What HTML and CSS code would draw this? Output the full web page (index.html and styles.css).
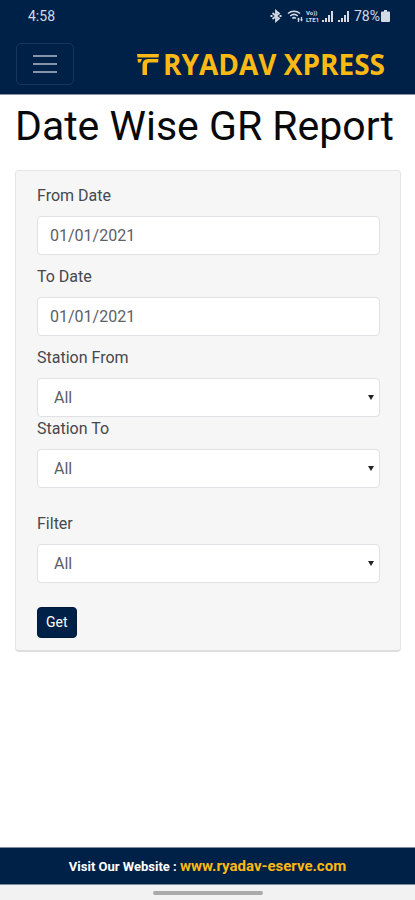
FILE: index.html
```html
<!DOCTYPE html>
<html lang="en">
<head>
<meta charset="utf-8">
<meta name="viewport" content="width=device-width, initial-scale=1">
<title>Date Wise GR Report</title>
<link rel="stylesheet" href="styles.css">
</head>
<body>
<header class="top">
  <div class="status">
    <span>4:58</span>
    <div class="status-icons">
      <svg width="12" height="14" viewBox="0 0 12 14" fill="none" stroke="currentColor" stroke-width="1.8"><path d="M2.500 4 9 9.500 6 12v-10L9 4.500 2.500 10"/><path d="M0.500 7h2M9.500 7h2"/></svg>
      <svg class="wifi" width="17" height="14" viewBox="0 0 17 14" fill="none" stroke="currentColor" stroke-width="1.600"><path d="M1 4.500C4.500 1.500 9.500 1.500 13 4.500M3.200 7c2.500-2 5.300-2 7.600 0M5.300 9.300c1.200-.9 2.400-.9 3.500 0"/><path d="M11.500 13V9.500M14.500 8v3.500" stroke-width="1.300"/><path d="M10 10.500 11.500 8.500 13 10.500zM13 10.500 14.500 12.500 16 10.500z" fill="currentColor" stroke="none"/></svg>
      <span class="volte"><span>Vo))</span><span>LTE1</span></span>
      <svg width="13" height="12" viewBox="0 0 13 12" fill="currentColor"><path d="M0 10h2v2H0zM3 8h2v4H3zM6 5h2v7H6zM9 1h2v11H9z"/></svg>
      <svg class="signal" width="13" height="12" viewBox="0 0 13 12" fill="currentColor"><path d="M0 10h2v2H0zM3 8h2v4H3zM6 5h2v7H6zM9 1h2v11H9z"/></svg>
      <span>78%</span>
      <svg width="9" height="12" viewBox="0 0 9 12" fill="currentColor"><path d="M3 0h3v1.500h2A1 1 0 0 1 9 2.500V11a1 1 0 0 1-1 1H1a1 1 0 0 1-1-1V2.500a1 1 0 0 1 1-1h2z"/></svg>
    </div>
  </div>
  <nav class="nav">
    <button class="menu" type="button" aria-label="Menu">
      <svg width="24" height="20" viewBox="0 0 24 20" stroke="currentColor" stroke-width="2"><path d="M0 2h24M0 10h24M0 18h24"/></svg>
    </button>
    <a class="brand" href="#">
      <svg width="22" height="21" viewBox="0 0 22 21" fill="currentColor"><path d="M0 0h22l-.5 3.500H.5zM11 5h10.500L21 8.500h-8.500Q10 8.500 10 11v10H5.500V11Q5.500 5 11 5zM.5 5H5L3.500 8.500H1z"/></svg>
      <span>RYADAV XPRESS</span>
    </a>
  </nav>
</header>
<main class="content">
  <h1>Date Wise GR Report</h1>
  <form class="card">
    <div class="field">
      <label for="from">From Date</label>
      <input class="control" id="from" type="text" value="01/01/2021">
    </div>
    <div class="field">
      <label for="to">To Date</label>
      <input class="control" id="to" type="text" value="01/01/2021">
    </div>
    <div class="field joined">
      <label for="station-from">Station From</label>
      <select class="control" id="station-from"><option>All</option></select>
    </div>
    <div class="field spaced">
      <label for="station-to">Station To</label>
      <select class="control" id="station-to"><option>All</option></select>
    </div>
    <div class="field spaced">
      <label for="filter">Filter</label>
      <select class="control" id="filter"><option>All</option></select>
    </div>
    <button class="get" type="button">Get</button>
  </form>
</main>
<footer>
  <div class="visit">Visit Our Website : <a href="#">www.ryadav-eserve.com</a></div>
  <div class="gesture"><div class="pill"></div></div>
</footer>
</body>
</html>
```
FILE: styles.css
```css
* { box-sizing: border-box; }

body {
  margin: 0;
  min-height: 100vh;
  display: flex;
  flex-direction: column;
  background: #fff;
  color: #212529;
  font: 16px/24px Roboto, sans-serif;
}

.top {
  background: #002147;
  padding-bottom: 9px;
  border-bottom: 1px solid #8b92a5;
}

.status {
  display: flex;
  justify-content: space-between;
  align-items: center;
  height: 32px;
  padding: 0 25px 0 28px;
  color: #d3dae6;
  font-size: 14px;
}

.status-icons { display: flex; align-items: center; }
.wifi { margin: 0 2px 0 5px; }
.signal { margin: 0 3px 0 3px; }

.volte {
  display: flex;
  flex-direction: column;
  width: 16px;
  font-size: 6px;
  line-height: 7px;
  font-weight: 700;
}

.status-icons > span:not(.volte) { margin-right: 1px; }

.nav {
  display: flex;
  justify-content: space-between;
  align-items: center;
  margin-top: 11px;
  padding: 0 30px 0 16px;
}

.menu {
  display: flex;
  align-items: center;
  justify-content: center;
  width: 58px;
  height: 42px;
  padding: 0;
  color: #8795aa;
  background: transparent;
  border: 1px solid #17365a;
  border-radius: 5px;
}

.brand {
  display: flex;
  align-items: center;
  gap: 4px;
  color: #fdb913;
  font: 700 28px/40px "Open Sans", sans-serif;
  text-decoration: none;
}

.content { flex: 1; padding: 7px 14px 24px 15px; }

h1 {
  margin: 0 0 20px;
  color: #08090b;
  font-size: 41px;
  line-height: 48px;
  font-weight: 400;
  white-space: nowrap;
}

.card {
  padding: 13px 20px 12px 21px;
  background: #f6f6f6;
  border: 1px solid #e5e5e5;
  border-bottom: 2px solid #dedede;
  border-radius: 4px;
}

.field { margin-bottom: 10px; }
.joined { margin-bottom: 0; }
.spaced { margin-bottom: 24px; }

label { display: block; margin-bottom: 8px; color: #45484c; }

.control {
  display: block;
  width: 100%;
  height: 39px;
  padding: 0 12px;
  color: #5c6067;
  background: #fff;
  border: 1px solid #dfe1e4;
  border-radius: 4px;
  font: inherit;
}

select.control {
  appearance: none;
  padding: 0 16px;
  background: #fff url("data:image/svg+xml,%3Csvg xmlns='http://www.w3.org/2000/svg' width='6' height='5'%3E%3Cpath d='M0 0h6L3 5z' fill='%23222'/%3E%3C/svg%3E") no-repeat right 5px center;
}

.get {
  display: block;
  height: 31px;
  padding: 0 8px;
  color: #fff;
  background: #002147;
  border: 1px solid #001a3a;
  border-radius: 4px;
  font: 14px/21px Roboto, sans-serif;
}

.visit {
  height: 38px;
  background: #002147;
  border-top: 1px solid #7f8ba0;
  border-bottom: 1px solid #7f8ba0;
  color: #fff;
  font-size: 13px;
  line-height: 36px;
  font-weight: 700;
  text-align: center;
}

.visit a { color: #fdb913; font-size: 15px; text-decoration: none; }

.gesture {
  display: flex;
  justify-content: center;
  height: 15px;
  padding-top: 6px;
  background: #f2f2f2;
}

.pill { width: 110px; height: 4px; border-radius: 2px; background: #aaa; }
```
